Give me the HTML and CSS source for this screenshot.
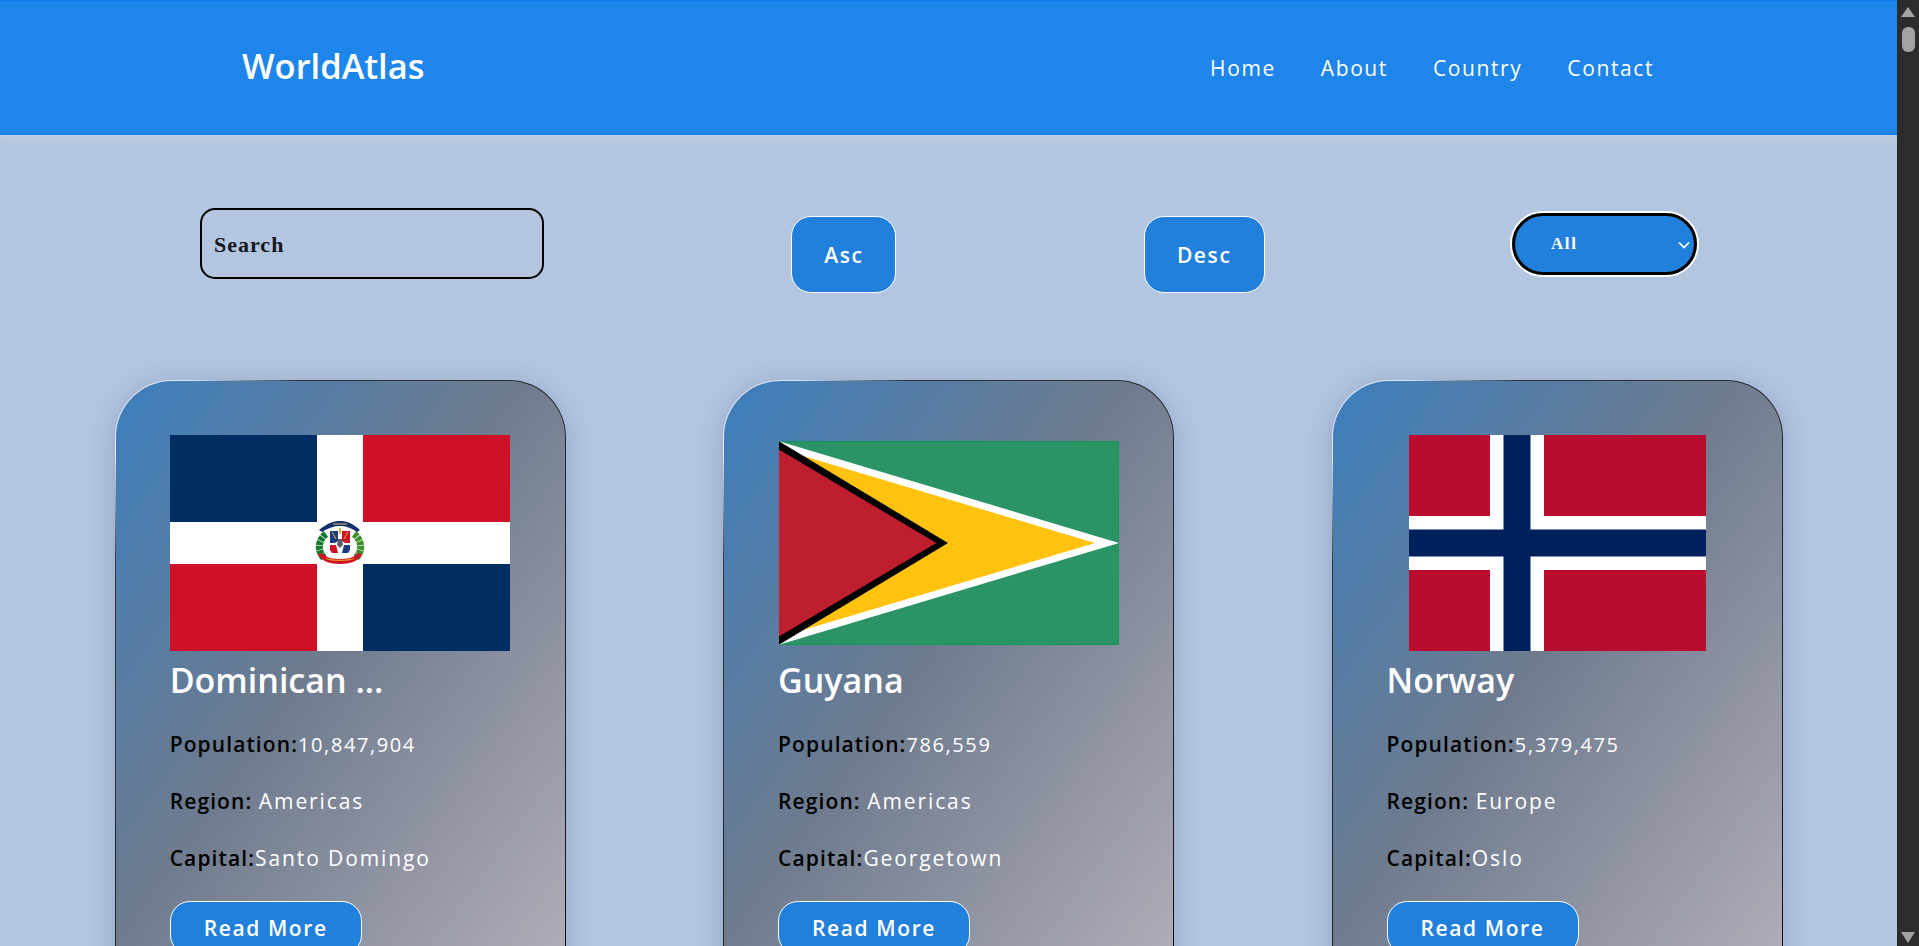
FILE: index.html
```html
<!DOCTYPE html>
<html lang="en">
<head>
  <meta charset="UTF-8" />
  <meta name="viewport" content="width=device-width, initial-scale=1.0"/>
  <title>WorldAtlas</title>
  <link rel="stylesheet" href="styles.css">
</head>
<body>

  <div class="page">
    <header class="site-header">
      <div class="logo">WorldAtlas</div>
      <nav class="site-nav">
        <a href="#">Home</a>
        <a href="#">About</a>
        <a href="#">Country</a>
        <a href="#">Contact</a>
      </nav>
    </header>

    <section class="toolbar">
      <input class="search" type="text" placeholder="Search" />
      <button class="button sort asc">Asc</button>
      <button class="button sort desc">Desc</button>
      <div class="region-select">
        <select>
          <option>All</option>
          <option>Africa</option>
          <option>Americas</option>
          <option>Asia</option>
          <option>Europe</option>
          <option>Oceania</option>
        </select>
        <svg class="chevron" viewBox="0 0 12 8"><path d="M1 1.5 6 6.5 11 1.5" fill="none" stroke="#fff" stroke-width="1.7"/></svg>
      </div>
    </section>

    <main class="country-grid">
      <article class="card">
        <div class="flag">
          <svg class="flag-dr" viewBox="0 0 340 216">
            <rect width="340" height="216" fill="#fff"/>
            <rect width="147" height="87" fill="#002d62"/>
            <rect x="193" width="147" height="87" fill="#ce1126"/>
            <rect y="129" width="147" height="87" fill="#ce1126"/>
            <rect x="193" y="129" width="147" height="87" fill="#002d62"/>
            <!-- coat of arms -->
            <path d="M156 99C148 105 147 116 154 123" fill="none" stroke="#0f7a2a" stroke-width="7" stroke-dasharray="4 .6"/>
            <path d="M184 99C192 105 193 116 186 123" fill="none" stroke="#3f8f2a" stroke-width="7" stroke-dasharray="4 .6"/>
            <path d="M149 95C158 88 163 86 170 86S182 88 190 95L187 97C180 92 175 91 170 91S160 92 152 97Z" fill="#12306a"/>
            <path d="M163 89h14" stroke="#d9c27a" stroke-width="1"/>
            <path d="M158 94h24v20q0 5-6 6h-12q-6-1-6-6z" fill="#fff"/>
            <path d="M160 96h8v10l-3 2h-5z" fill="#1b3a80"/>
            <path d="M172 96h8v12h-5l-3-2z" fill="#ce1126"/>
            <path d="M160 110h6l2 8h-6l-2-3z" fill="#ce1126"/>
            <path d="M174 110h6v5l-2 3h-6z" fill="#1b3a80"/>
            <path d="M162 97l4 7M178 97l-4 7" stroke="#e2b93b" stroke-width="1"/>
            <rect x="169" y="93" width="2" height="6" fill="#e2b93b"/>
            <path d="M168 104h4l1 6-3 3-3-3z" fill="#5c5c66"/>
            <path d="M148 119C151 126 160 129 170 129S189 126 192 119L188 118C184 123 177 124 170 124S156 123 152 118Z" fill="#ce1126"/>
            <path d="M156 123.500C162 126 178 126 184 123.500" fill="none" stroke="#e8a020" stroke-width="1.200"/>
          </svg>
        </div>
        <h2>Dominican ...</h2>
        <p class="pop"><strong>Population:</strong>10,847,904</p>
        <p><strong>Region: </strong>Americas</p>
        <p><strong>Capital:</strong>Santo Domingo</p>
        <button class="button read-more">Read More</button>
      </article>

      <article class="card">
        <div class="flag">
          <svg class="flag-gy" viewBox="0 0 1022 612">
            <rect width="1022" height="612" fill="#2b9467" stroke="#009e49" stroke-width="3"/>
            <polygon points="0,0 1022,306 0,612" fill="#fff"/>
            <polygon points="0,23 950,306 0,589" fill="#ffc20e"/>
            <polygon points="0,0 508,306 0,612" fill="#000"/>
            <polygon points="0,25 473,306 0,587" fill="#be1e2d"/>
          </svg>
        </div>
        <h2>Guyana</h2>
        <p class="pop"><strong>Population:</strong>786,559</p>
        <p><strong>Region: </strong>Americas</p>
        <p><strong>Capital:</strong>Georgetown</p>
        <button class="button read-more">Read More</button>
      </article>

      <article class="card">
        <div class="flag">
          <svg class="flag-no" viewBox="0 0 22 16">
            <rect width="22" height="16" fill="#ba0c2f"/>
            <rect x="6" width="4" height="16" fill="#fff"/>
            <rect y="6" width="22" height="4" fill="#fff"/>
            <rect x="7" width="2" height="16" fill="#00205b"/>
            <rect y="7" width="22" height="2" fill="#00205b"/>
          </svg>
        </div>
        <h2>Norway</h2>
        <p class="pop"><strong>Population:</strong>5,379,475</p>
        <p><strong>Region: </strong>Europe</p>
        <p><strong>Capital:</strong>Oslo</p>
        <button class="button read-more">Read More</button>
      </article>
    </main>
  </div>

  <div class="scrollbar">
    <span class="arrow up"></span>
    <span class="thumb"></span>
    <span class="arrow down"></span>
  </div>

</body>
</html>
```

FILE: styles.css
```css
* {
  box-sizing: border-box;
}

body {
  margin: 0;
  height: 946px;
  display: flex;
  overflow: hidden;
  background-color: #b0c4de;
  font-family: 'Open Sans', sans-serif;
  letter-spacing: 1.6px;
  color: #fff;
}

.page {
  flex: 1;
  min-width: 0;
  height: 946px;
  overflow: hidden;
  background-color: #b3c5df;
}

/* header */
.site-header {
  height: 135px;
  padding: 0 243px 0 242px;
  display: flex;
  align-items: center;
  justify-content: space-between;
  background-color: #1e85eb;
  border-top: 1px solid #0d80f5;
  border-bottom: 1px solid #0d80f5;
  box-shadow: 0 3px 14px rgba(255,255,255,0.25);
}

.logo {
  margin-bottom: 4px;
  font-size: 34.5px;
  font-weight: 600;
  letter-spacing: 0;
}

.site-nav {
  display: flex;
  gap: 45px;
}

.site-nav a {
  color: #fff;
  font-size: 21px;
  text-decoration: none;
}

/* search, sort, filter */
.toolbar {
  display: flex;
  justify-content: space-between;
  align-items: flex-start;
  padding: 73px 198px 0 200px;
  height: 245px;
}

.search {
  width: 344px;
  height: 71px;
  padding: 2px 12px 0;
  border: 2px solid #000;
  border-radius: 15px;
  background: transparent;
  font-family: 'Liberation Serif', serif;
  font-size: 22px;
  font-weight: bold;
  letter-spacing: 1px;
}

.search::placeholder {
  color: #14181f;
  opacity: 1;
}

.button {
  border: 1px solid #fff;
  background-color: #2280dd;
  color: #fff;
  font-family: 'Open Sans', sans-serif;
  font-size: 21px;
  font-weight: 600;
  letter-spacing: 1.6px;
  border-radius: 20px;
}

.sort {
  margin: 8px 0 0 2px;
  height: 77px;
  padding: 0;
}

.asc { width: 105px; }
.desc { width: 121px; }

.region-select {
  position: relative;
  margin-top: 3px;
  width: 189px;
  height: 66px;
  border: 2px solid #fff;
  border-radius: 33px;
}

.region-select select {
  width: 100%;
  height: 100%;
  padding: 0 0 2px 36px;
  appearance: none;
  border: 3px solid #000;
  border-radius: 31px;
  background-color: #2280dd;
  color: #fff;
  font-family: 'Liberation Serif', serif;
  font-size: 17px;
  font-weight: bold;
  letter-spacing: 1.6px;
}

.chevron {
  position: absolute;
  right: 7px;
  top: 28px;
  width: 12px;
  height: 8px;
}

/* country cards */
.country-grid {
  display: grid;
  grid-template-columns: repeat(3, 451px);
  justify-content: space-between;
  padding: 0 114.5px 0 114.7px;
}

.card {
  padding: 54px;
  height: 640px;
  border: 1px solid transparent;
  border-radius: 57px;
  background:
    linear-gradient(126deg, #3c7ebd 0%, #6e7b8e 44%, #b7b1bb 100%) padding-box,
    linear-gradient(135deg, #dfe6f2 0%, #dfe6f2 7%, #333 17%, #111 100%) border-box;
  box-shadow: 0 4px 24px rgba(60,90,150,0.3);
}

.flag {
  height: 216px;
  display: flex;
  align-items: center;
  justify-content: center;
}

.flag svg {
  display: block;
}

.flag-dr { width: 340px; height: 216px; }
.flag-gy { width: 340px; height: 204px; }
.flag-no { width: 297px; height: 216px; }

.card h2 {
  margin: 0 0 7px;
  font-size: 34px;
  font-weight: 600;
  letter-spacing: 0;
  line-height: 58px;
}

.card p {
  margin: 0;
  height: 57px;
  font-size: 21px;
  letter-spacing: 1.9px;
  line-height: 57px;
}

.card p.pop {
  font-size: 20px;
  letter-spacing: 1.6px;
}

.card p strong {
  color: #000;
  font-size: 21px;
  font-weight: 600;
  letter-spacing: 1.1px;
}

.read-more {
  margin-top: 14px;
  width: 192px;
  height: 54px;
}

/* scrollbar drawn in flow since the window one doesn't show in the photo */
.scrollbar {
  width: 22px;
  height: 946px;
  flex-shrink: 0;
  padding: 7px 0 3px;
  display: flex;
  flex-direction: column;
  align-items: center;
  background-color: #2c2c2c;
}

.arrow {
  width: 0;
  height: 0;
  border-left: 7px solid transparent;
  border-right: 7px solid transparent;
}

.arrow.up { border-bottom: 10px solid #a3a3a3; }
.arrow.down { margin-top: auto; border-top: 11px solid #a3a3a3; }

.thumb {
  margin-top: 10px;
  width: 13px;
  height: 25px;
  border-radius: 6px;
  background-color: #a3a3a3;
}
```
